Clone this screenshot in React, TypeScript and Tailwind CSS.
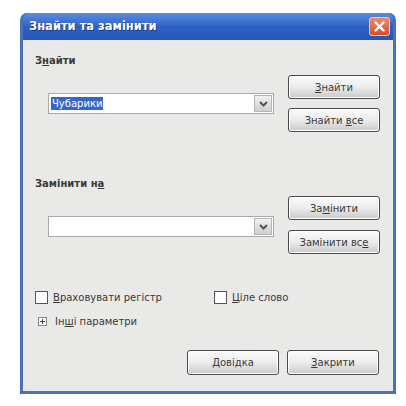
import React from "react";

const font = { fontFamily: '"DejaVu Sans", "Liberation Sans", sans-serif' };

function Btn({ children, className = "" }: { children: React.ReactNode; className?: string }) {
  return (
    <div
      className={
        "flex items-center justify-center h-[24px] w-[92px] rounded-[3px] border border-[#4a4a4a] bg-gradient-to-b from-[#fbfbfb] via-[#ececec] to-[#c9c9c9] text-[10px] text-[#3a3a3a] shadow-[inset_0_0_0_1px_#ffffff] " +
        className
      }
    >
      <span>{children}</span>
    </div>
  );
}

function Combo({ children }: { children?: React.ReactNode }) {
  return (
    <div className="flex h-[21px] w-[226px] items-center border border-[#a9a9a9] bg-white pl-[2px] pr-[1px]">
      <div className="flex-1 flex items-center">{children}</div>
      <div className="flex h-[17px] w-[18px] items-center justify-center border border-[#b5b5b5] bg-gradient-to-b from-[#f0f0f0] to-[#d0d0d0]">
        <svg width="9" height="6" viewBox="0 0 9 6">
          <path d="M1 1 L4.5 4.5 L8 1" stroke="#555" strokeWidth="2" fill="none" />
        </svg>
      </div>
    </div>
  );
}

function Check({ label }: { label: React.ReactNode }) {
  return (
    <div className="flex items-center gap-[5px]">
      <div className="h-[13px] w-[13px] border border-[#555] bg-white" />
      <span className="text-[10px] text-[#3a3a3a]">{label}</span>
    </div>
  );
}

export default function App() {
  return (
    <div className="w-[406px] h-[406px] bg-white" style={font}>
      <div className="pt-[13px] pl-[20px]">
        <div className="flex h-[381px] w-[376px] flex-col rounded-t-[7px] border-x-[3px] border-b-[3px] border-[#4a72b8] bg-[#2f5fc0]">
          {/* title bar */}
          <div className="flex h-[27px] items-center justify-between rounded-t-[6px] bg-gradient-to-b from-[#5b8ee0] via-[#2f62c8] to-[#2557b8] pl-[6px] pr-[3px]">
            <span className="text-[11.5px] font-bold text-white [text-shadow:1px_1px_0_#1a3a80]">Знайти та замінити</span>
            <div className="flex h-[19px] w-[21px] items-center justify-center rounded-[3px] border border-[#f5c8b8] bg-gradient-to-b from-[#f08a6a] to-[#d84a2a]">
              <svg width="11" height="11" viewBox="0 0 11 11">
                <path d="M1.5 1.5 L9.5 9.5 M9.5 1.5 L1.5 9.5" stroke="#fff" strokeWidth="2.4" strokeLinecap="round" />
              </svg>
            </div>
          </div>
          {/* body */}
          <div className="flex-1 bg-[#e9e9e7] pl-[12px] pr-[12px]">
            {/* section 1 */}
            <div className="flex">
              <div className="flex w-[253px] flex-col">
                <div className="mt-[13px] text-[10px] font-bold text-[#3a3a3a]">
                  З<u>н</u>айти
                </div>
                <div className="ml-[13px] mt-[25px]">
                  <Combo>
                    <span className="bg-[#3566c8] px-[1px] text-[10px] leading-[13px] text-white">Чубарики</span>
                  </Combo>
                </div>
              </div>
              <div className="flex flex-col gap-[9px] pt-[35px]">
                <Btn>
                  <u>З</u>найти
                </Btn>
                <Btn>
                  Знайти <u>в</u>се
                </Btn>
              </div>
            </div>
            {/* section 2 */}
            <div className="flex">
              <div className="flex w-[253px] flex-col">
                <div className="mt-[44px] text-[10px] font-bold text-[#3a3a3a]">
                  Замінити н<u>а</u>
                </div>
                <div className="ml-[13px] mt-[25px]">
                  <Combo />
                </div>
              </div>
              <div className="flex flex-col gap-[10px] pt-[64px]">
                <Btn>
                  За<u>м</u>інити
                </Btn>
                <Btn>
                  Замінити вс<u>е</u>
                </Btn>
              </div>
            </div>
            {/* checkboxes */}
            <div className="mt-[36px] flex">
              <div className="w-[179px]">
                <Check label={<><u>В</u>раховувати регістр</>} />
              </div>
              <Check label={<><u>Ц</u>іле слово</>} />
            </div>
            <div className="ml-[3px] mt-[9px] flex items-center gap-[8px]">
              <div className="flex h-[9px] w-[9px] items-center justify-center border border-[#888] bg-white">
                <svg width="5" height="5" viewBox="0 0 5 5">
                  <path d="M0 2.5 H5 M2.5 0 V5" stroke="#444" strokeWidth="1" />
                </svg>
              </div>
              <span className="text-[10px] text-[#3a3a3a]">
                Ін<u>ш</u>і параметри
              </span>
            </div>
            <div className="mt-[21px] flex justify-end gap-[8px] pr-[2px]">
              <Btn className="w-[88px] h-[25px]">
                <u>Д</u>овідка
              </Btn>
              <Btn className="w-[90px] h-[25px]">
                <u>З</u>акрити
              </Btn>
            </div>
          </div>
        </div>
      </div>
    </div>
  );
}
